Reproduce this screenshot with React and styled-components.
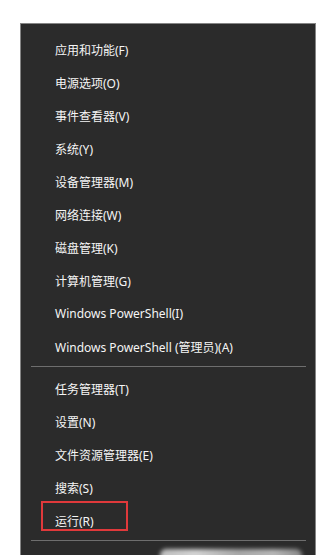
import React from "react";
import styled, { createGlobalStyle } from "styled-components";

const GlobalStyle = createGlobalStyle`
  html, body {
    margin: 0;
    padding: 0;
    background: #ffffff;
    overflow: hidden;
  }
`;

const Page = styled.div`
  width: 327px;
  height: 555px;
  overflow: hidden;
  padding: 23px 0 0 20px;
  box-sizing: border-box;
`;

const Menu = styled.div`
  width: 296px;
  box-sizing: border-box;
  background: #2b2b2b;
  border: 1px solid #858585;
  border-bottom: none;
  padding-top: 9px;
  font-family: "Noto Sans", "Noto Sans CJK SC", sans-serif;
  font-size: 12px;
  color: #f5f5f5;
`;

const Item = styled.div`
  position: relative;
  height: 33px;
  display: flex;
  align-items: center;
  padding-left: 34px;
  white-space: nowrap;

  ${(p) =>
    p.$marked &&
    `
    &::after {
      content: "";
      position: absolute;
      left: 20px;
      top: -3px;
      width: 87px;
      height: 30px;
      box-sizing: border-box;
      border: 2px solid #e0393b;
    }
  `}
`;

const Divider = styled.div`
  height: 1px;
  background: #6e6e6e;
  margin: 3px 9px 5px 10px;
`;

const BlurRow = styled.div`
  height: 33px;
  display: flex;
  align-items: flex-start;
  padding: 3px 0 0 139px;
  box-sizing: border-box;
`;

const Smudge = styled.div`
  width: 142px;
  height: 14px;
  border-radius: 6px;
  background: linear-gradient(90deg, #d8d8d8 0%, #f2f2f2 25%, #bdbdbd 55%, #d0d0d0 80%, #9a9a9a 100%);
  filter: blur(2px);
  opacity: 0.85;
`;

const groups = [
  [
    "应用和功能(F)",
    "电源选项(O)",
    "事件查看器(V)",
    "系统(Y)",
    "设备管理器(M)",
    "网络连接(W)",
    "磁盘管理(K)",
    "计算机管理(G)",
    "Windows PowerShell(I)",
    "Windows PowerShell (管理员)(A)",
  ],
  ["任务管理器(T)", "设置(N)", "文件资源管理器(E)", "搜索(S)", "运行(R)"],
];

export default function App() {
  return (
    <Page>
      <GlobalStyle />
      <Menu>
        {groups.map((group, gi) => (
          <React.Fragment key={gi}>
            {gi > 0 && <Divider />}
            {group.map((label) => (
              <Item key={label} $marked={label === "运行(R)"}>
                {label}
              </Item>
            ))}
          </React.Fragment>
        ))}
        <Divider />
        <BlurRow>
          <Smudge />
        </BlurRow>
      </Menu>
    </Page>
  );
}
